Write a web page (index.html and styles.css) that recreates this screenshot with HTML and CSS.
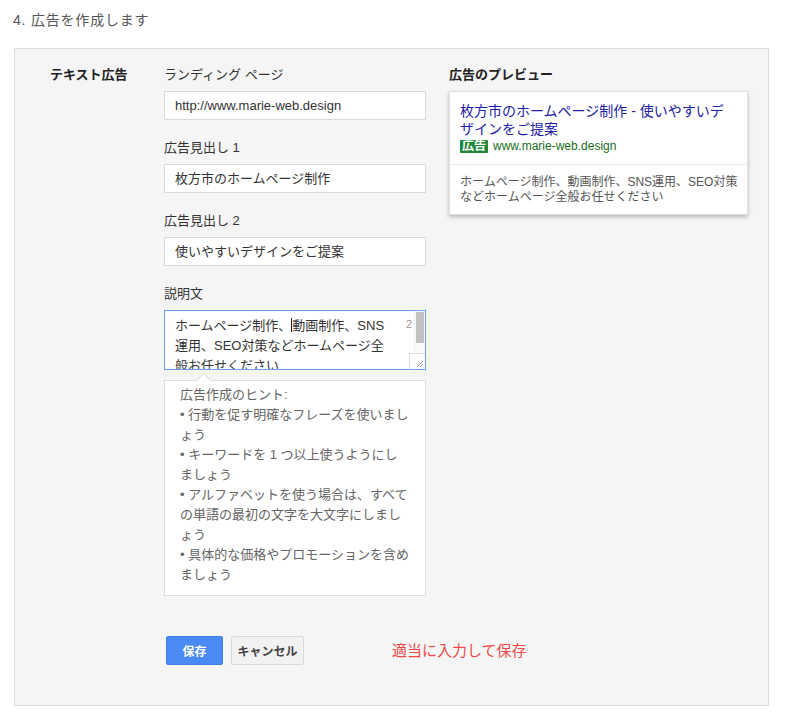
FILE: index.html
```html
<!DOCTYPE html>
<html lang="ja">
<head>
<meta charset="utf-8">
<title>広告を作成します</title>
<link rel="stylesheet" href="styles.css">
</head>
<body>
<h1 class="step-title">4. 広告を作成します</h1>
<section class="panel">
  <div class="side-label">テキスト広告</div>

  <div class="form-col">
    <div class="field">
      <div class="field-label">ランディング ページ</div>
      <div class="input">http://www.marie-web.design</div>
    </div>
    <div class="field">
      <div class="field-label">広告見出し 1</div>
      <div class="input">枚方市のホームページ制作</div>
    </div>
    <div class="field">
      <div class="field-label">広告見出し 2</div>
      <div class="input">使いやすいデザインをご提案</div>
    </div>
    <div class="field">
      <div class="field-label">説明文</div>
      <div class="textarea">
        <div class="ta-text">
          <div class="ta-line">ホームページ制作、<span class="caret"></span>動画制作、SNS</div>
          <div class="ta-line">運用、SEO対策などホームページ全</div>
          <div class="ta-line">般お任せください</div>
        </div>
        <span class="ta-count">2</span>
        <span class="ta-track"><span class="ta-thumb"></span></span>
        <span class="ta-grip">
          <svg width="10" height="10" viewBox="0 0 10 10"><path d="M9 3 L3 9 M9 6 L6 9" stroke="#888" stroke-width="1" fill="none"/></svg>
        </span>
      </div>
      <div class="hint">
        <div>広告作成のヒント:</div>
        <div>• 行動を促す明確なフレーズを使いまし<br>ょう</div>
        <div>• キーワードを 1 つ以上使うようにし<br>ましょう</div>
        <div>• アルファベットを使う場合は、すべて<br>の単語の最初の文字を大文字にしまし<br>ょう</div>
        <div>• 具体的な価格やプロモーションを含め<br>ましょう</div>
      </div>
    </div>
    <div class="actions">
      <button class="btn btn-primary" type="button">保存</button>
      <button class="btn btn-default" type="button">キャンセル</button>
      <span class="note">適当に入力して保存</span>
    </div>
  </div>

  <div class="preview-col">
    <div class="side-label">広告のプレビュー</div>
    <div class="ad-card">
      <div class="ad-head">
        <div class="ad-title">枚方市のホームページ制作 - 使いやすいデ<br>ザインをご提案</div>
        <div class="ad-url-row"><span class="ad-badge">広告</span><span class="ad-url">www.marie-web.design</span></div>
      </div>
      <div class="ad-desc">ホームページ制作、動画制作、SNS運用、SEO対策<br>などホームページ全般お任せください</div>
    </div>
  </div>
</section>
</body>
</html>
```

FILE: styles.css
```css
* { box-sizing: border-box; }

body {
  margin: 0;
  background: #fff;
  font-family: "Liberation Sans", "Noto Sans CJK JP", sans-serif;
  color: #333;
}

.step-title {
  margin: 0;
  padding: 10px 0 18px 13px;
  font-size: 14px;
  line-height: 20px;
  letter-spacing: 0.8px;
  font-weight: normal;
  color: #555;
}

.panel {
  margin-left: 14px;
  width: 755px;
  height: 658px;
  background: #f5f5f5;
  border: 1px solid #dcdcdc;
  display: grid;
  grid-template-columns: 149px 285px 299px;
  column-gap: 0;
  align-items: start;
  padding: 16px 0 40px 0;
}

.side-label {
  padding-left: 35px;
  font-size: 13px;
  line-height: 20px;
  font-weight: bold;
  color: #222;
  white-space: nowrap;
}

.preview-col .side-label {
  padding-left: 0;
  margin-bottom: 6px;
}

.form-col {
  width: 262px;
  display: flex;
  flex-direction: column;
}

.field {
  display: flex;
  flex-direction: column;
  margin-bottom: 18px;
}

.field-label {
  font-size: 13px;
  line-height: 20px;
  color: #333;
  margin-bottom: 6px;
}

.input {
  height: 29px;
  background: #fff;
  border: 1px solid #d9d9d9;
  padding: 0 10px;
  font-size: 13px;
  line-height: 27px;
  color: #333;
  white-space: nowrap;
  overflow: hidden;
}

.textarea {
  position: relative;
  height: 60px;
  background: #fff;
  border: 1px solid #6f9fe6;
  padding: 5px 0 0 10px;
  overflow: hidden;
}

.ta-line {
  font-size: 13px;
  line-height: 20px;
  color: #333;
  white-space: nowrap;
}

.caret {
  display: inline-block;
  width: 1px;
  height: 14px;
  background: #222;
  vertical-align: -2px;
}

.ta-count {
  position: absolute;
  right: 13px;
  top: 6px;
  font-size: 11px;
  line-height: 14px;
  color: #999;
}

.ta-track {
  position: absolute;
  right: 0;
  top: 0;
  width: 11px;
  height: 100%;
  background: #fafafa;
  border-left: 1px solid #eee;
}

.ta-thumb {
  position: absolute;
  left: 1px;
  top: 1px;
  width: 8px;
  height: 31px;
  background: #c1c1c1;
}

.ta-grip {
  position: absolute;
  right: 0;
  bottom: 0;
  width: 16px;
  height: 16px;
  background: #fff;
  border-left: 1px solid #ddd;
  border-top: 1px solid #ddd;
  display: flex;
  align-items: flex-end;
  justify-content: flex-end;
  padding: 0 1px 1px 0;
}

.hint {
  position: relative;
  margin-top: 10px;
  background: #fff;
  border: 1px solid #dcdcdc;
  padding: 4px 10px 10px 15px;
  font-size: 13px;
  line-height: 20px;
  color: #666;
  white-space: nowrap;
}

.hint::before {
  content: "";
  position: absolute;
  left: 33px;
  top: -6px;
  width: 10px;
  height: 10px;
  background: #fff;
  border-left: 1px solid #dcdcdc;
  border-top: 1px solid #dcdcdc;
  transform: rotate(45deg);
}

.actions {
  margin-top: 22px;
  display: flex;
  align-items: center;
  padding-left: 2px;
}

.btn {
  flex-shrink: 0;
  height: 29px;
  font-family: inherit;
  font-size: 12px;
  font-weight: bold;
  border-radius: 2px;
  padding: 0;
  white-space: nowrap;
  cursor: pointer;
}

.btn-primary {
  width: 57px;
  background: #4a8af4;
  border: 1px solid #3f7fe8;
  color: #fff;
}

.btn-default {
  width: 73px;
  margin-left: 8px;
  background: #f2f2f2;
  border: 1px solid #d8d8d8;
  color: #444;
}

.note {
  flex-shrink: 0;
  margin-left: 88px;
  font-size: 15px;
  line-height: 20px;
  color: #ef4a4a;
  white-space: nowrap;
}

.ad-card {
  background: #fff;
  border: 1px solid #e0e0e0;
  box-shadow: 0 2px 4px rgba(0, 0, 0, 0.25);
}

.ad-head {
  padding: 10px 10px 10px 10px;
  border-bottom: 1px solid #ececec;
}

.ad-title {
  font-size: 14px;
  line-height: 18px;
  color: #2220a6;
  white-space: nowrap;
}

.ad-url-row {
  display: flex;
  align-items: center;
  height: 16px;
}

.ad-badge {
  background: #21883a;
  color: #fff;
  font-size: 12px;
  font-weight: bold;
  line-height: 13px;
  padding: 0 2px;
  border-radius: 1px;
  margin-right: 5px;
}

.ad-url {
  font-size: 12px;
  line-height: 16px;
  color: #196b24;
}

.ad-desc {
  padding: 10px 6px 9px 10px;
  font-size: 12px;
  line-height: 15px;
  color: #555;
  white-space: nowrap;
}
```
